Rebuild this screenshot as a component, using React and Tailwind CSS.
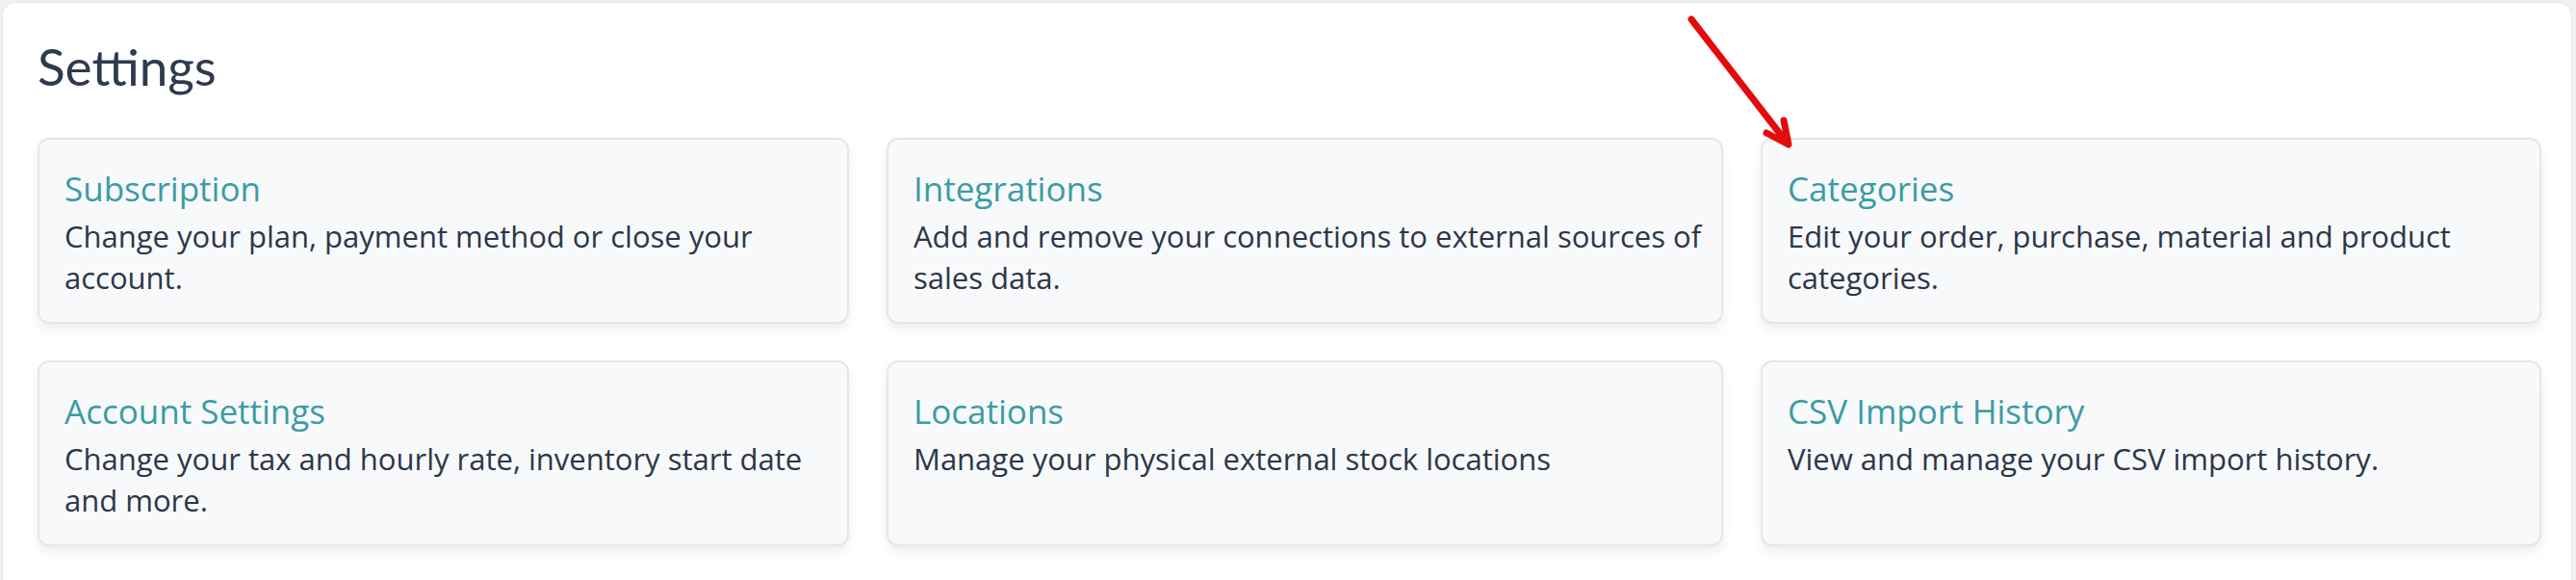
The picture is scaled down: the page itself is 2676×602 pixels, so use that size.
const CARDS = [
  { title: 'Subscription', text: 'Change your plan, payment method or close your account.' },
  { title: 'Integrations', text: 'Add and remove your connections to external sources of sales data.' },
  { title: 'Categories', text: 'Edit your order, purchase, material and product categories.' },
  { title: 'Account Settings', text: 'Change your tax and hourly rate, inventory start date and more.' },
  { title: 'Locations', text: 'Manage your physical external stock locations' },
  { title: 'CSV Import History', text: 'View and manage your CSV import history.' },
]

const SettingsCard = ({ title, text }) => (
  <div className="rounded-[12px] border-2 border-[#e5e6ea] bg-[#f8f9fb] pl-[26px] pr-[14px] pt-[30px] pb-[24px] shadow-[0_6px_12px_rgba(0,0,0,0.07)]">
    <div className="text-[35px] leading-[42px] text-[#3a9ca5]">{title}</div>
    <p className="mt-[7px] text-[31px] leading-[43px] text-[#2d3648]">{text}</p>
  </div>
)

export default function App() {
  return (
    <div className="relative min-h-screen bg-[#f1f1f2] pt-[2px] pl-[2px] font-['Open_Sans',sans-serif]">
      <div className="w-[2670px] min-h-[620px] rounded-[14px] border border-[#e8e8ea] bg-white pt-[40px] pl-[36px]">
        <h1 className="font-['Lato',sans-serif] text-[53px] leading-[52px] font-normal text-[#2e3a4d]">Settings</h1>
        <div className="mt-[48px] grid grid-cols-[843px_869px_811px] gap-x-[39px] gap-y-[38px]">
          {CARDS.map((c) => (
            <SettingsCard key={c.title} title={c.title} text={c.text} />
          ))}
        </div>
      </div>
      <svg className="absolute left-[1740px] top-[10px] w-[130px] h-[150px]" viewBox="0 0 130 150" fill="none">
        <path d="M17 10 L117 139" stroke="#e30b0b" strokeWidth="7" strokeLinecap="round" />
        <path d="M95 128 L118 140 L113 115" stroke="#e30b0b" strokeWidth="7" strokeLinecap="round" strokeLinejoin="round" />
      </svg>
    </div>
  )
}
